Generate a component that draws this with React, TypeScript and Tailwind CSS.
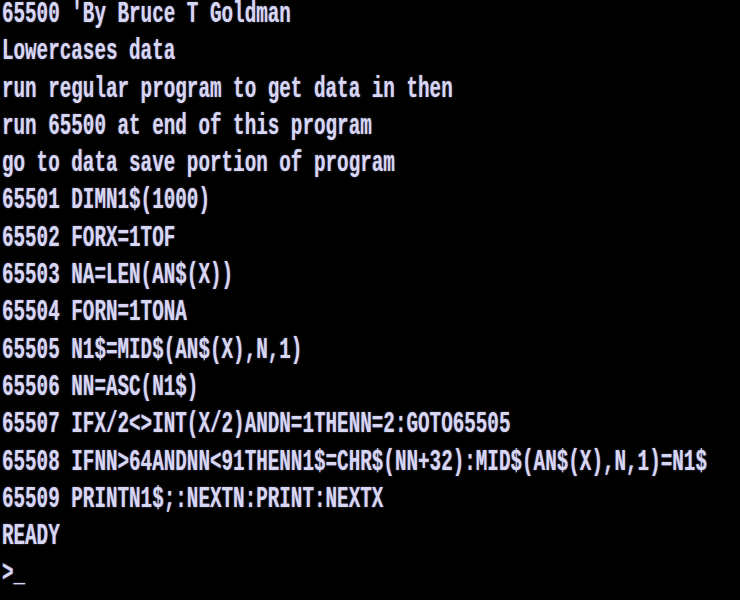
const lines = [
  "65500 'By Bruce T Goldman",
  "Lowercases data",
  "run regular program to get data in then",
  "run 65500 at end of this program",
  "go to data save portion of program",
  "65501 DIMN1$(1000)",
  "65502 FORX=1TOF",
  "65503 NA=LEN(AN$(X))",
  "65504 FORN=1TONA",
  "65505 N1$=MID$(AN$(X),N,1)",
  "65506 NN=ASC(N1$)",
  "65507 IFX/2<>INT(X/2)ANDN=1THENN=2:GOTO65505",
  "65508 IFNN>64ANDNN<91THENN1$=CHR$(NN+32):MID$(AN$(X),N,1)=N1$",
  "65509 PRINTN1$;:NEXTN:PRINT:NEXTX",
  "READY",
  ">_",
];

export default function App() {
  return (
    <div className="w-[740px] h-[600px] bg-black overflow-hidden">
      <div className="pl-[3px] -mt-[4px] origin-left scale-x-[0.642] w-[1150px] font-['Liberation_Mono',monospace] text-[30px] leading-[37.3px] font-bold text-[#d8d6f5] whitespace-pre [text-shadow:0_0_2px_rgba(200,200,255,0.6)]">
        {lines.map((l, i) => (
          <div key={i}>{l}</div>
        ))}
      </div>
    </div>
  );
}
